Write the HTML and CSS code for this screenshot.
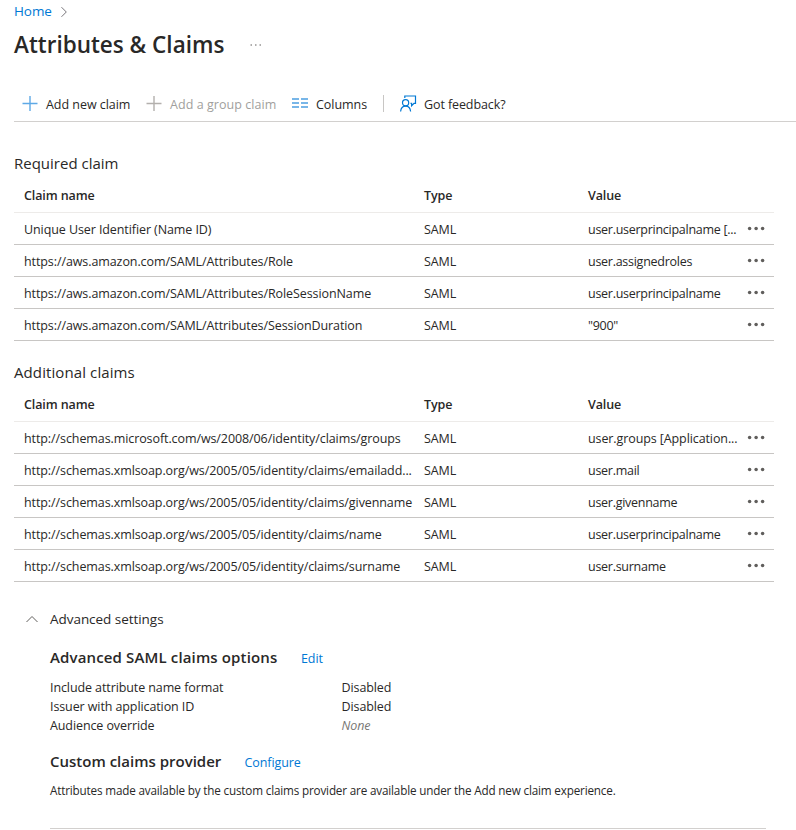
FILE: index.html
```
<!DOCTYPE html>
<html lang="en">
<head>
<meta charset="utf-8">
<title>Attributes &amp; Claims</title>
<link rel="stylesheet" href="styles.css">
</head>
<body>
<svg class="sprite" aria-hidden="true">
  <symbol id="more" viewBox="0 0 18 6"><circle cx="2.6" cy="2.6" r="1.75"/><circle cx="9.1" cy="2.6" r="1.75"/><circle cx="15.6" cy="2.6" r="1.75"/></symbol>
</svg>
<nav class="breadcrumb"><a href="#">Home</a><svg width="8" height="12" viewBox="0 0 8 12"><path d="M1.5 1.2 6.3 6 1.5 10.8"/></svg></nav>
<header class="title"><h1>Attributes &amp; Claims</h1><svg width="12" height="4" viewBox="0 0 12 4"><path d="M.5 2h1.5M5 2h1.5M9.5 2H11"/></svg></header>
<div class="toolbar">
  <button class="cmd add"><svg width="16" height="16" viewBox="0 0 16 16"><path d="M.5 7.5h15M8 0v15"/></svg><span>Add new claim</span></button>
  <button class="cmd group" disabled><svg width="16" height="16" viewBox="0 0 16 16"><path d="M.5 7.5h15M8 0v15"/></svg><span>Add a group claim</span></button>
  <button class="cmd columns"><svg width="16" height="16" viewBox="0 0 16 16"><path d="M0 3h7M9 3h7M0 7h7M9 7h7M0 11h7M9 11h7"/></svg><span>Columns</span></button>
  <i class="divider"></i>
  <button class="cmd feedback"><svg width="17" height="17" viewBox="0 0 17 17"><circle cx="5.6" cy="7.8" r="3.1"/><path d="M.6 16.5c.3-3.2 2.3-5.3 5-5.3s4.7 2.1 5 5.3M4.8 3V1H15.500V8.400H14L11.600 10.800V8.400H10.500"/></svg><span>Got feedback?</span></button>
</div>
<main>
  <section class="claims">
    <h2>Required claim</h2>
    <div class="row head"><span>Claim name</span><span>Type</span><span>Value</span></div>
    <div class="row"><span>Unique User Identifier (Name ID)</span><span>SAML</span><span>user.userprincipalname [...</span><svg><use href="#more"/></svg></div>
    <div class="row"><span>https://aws.amazon.com/SAML/Attributes/Role</span><span>SAML</span><span>user.assignedroles</span><svg><use href="#more"/></svg></div>
    <div class="row"><span>https://aws.amazon.com/SAML/Attributes/RoleSessionName</span><span>SAML</span><span>user.userprincipalname</span><svg><use href="#more"/></svg></div>
    <div class="row"><span>https://aws.amazon.com/SAML/Attributes/SessionDuration</span><span>SAML</span><span>"900"</span><svg><use href="#more"/></svg></div>
  </section>
  <section class="claims">
    <h2 class="wide">Additional claims</h2>
    <div class="row head"><span>Claim name</span><span>Type</span><span>Value</span></div>
    <div class="row"><span>http://schemas.microsoft.com/ws/2008/06/identity/claims/groups</span><span>SAML</span><span class="mixed">user.groups [Application...</span><svg><use href="#more"/></svg></div>
    <div class="row"><span>http://schemas.xmlsoap.org/ws/2005/05/identity/claims/emailadd...</span><span>SAML</span><span>user.mail</span><svg><use href="#more"/></svg></div>
    <div class="row"><span>http://schemas.xmlsoap.org/ws/2005/05/identity/claims/givenname</span><span>SAML</span><span>user.givenname</span><svg><use href="#more"/></svg></div>
    <div class="row"><span>http://schemas.xmlsoap.org/ws/2005/05/identity/claims/name</span><span>SAML</span><span>user.userprincipalname</span><svg><use href="#more"/></svg></div>
    <div class="row"><span>http://schemas.xmlsoap.org/ws/2005/05/identity/claims/surname</span><span>SAML</span><span>user.surname</span><svg><use href="#more"/></svg></div>
  </section>
  <section class="advanced">
    <div class="toggle"><svg width="12" height="8" viewBox="0 0 12 8"><path d="M.5 7 6 1.5 11.5 7"/></svg><span>Advanced settings</span></div>
    <div class="panel">
      <div class="heading"><h3 class="saml">Advanced SAML claims options</h3><a href="#">Edit</a></div>
      <dl>
        <dt>Include attribute name format</dt><dd>Disabled</dd>
        <dt>Issuer with application ID</dt><dd>Disabled</dd>
        <dt>Audience override</dt><dd class="none">None</dd>
      </dl>
      <div class="heading"><h3 class="custom">Custom claims provider</h3><a href="#">Configure</a></div>
      <p>Attributes made available by the custom claims provider are available under the Add new claim experience.</p>
    </div>
  </section>
</main>
</body>
</html>
```
FILE: styles.css
```
* { box-sizing: border-box; }
body {
  margin: 0;
  height: 830px;
  overflow: hidden;
  background: #fff;
  color: #292827;
  font: 12.5px/18px "Open Sans", "Noto Sans", sans-serif;
  letter-spacing: -0.09px;
  white-space: nowrap;
}
svg { flex: none; fill: none; }
.sprite { display: none; }
a { color: #0078d4; text-decoration: none; }
h1, h2, h3, p, dl, dd { margin: 0; }
h1, h3 { font-weight: 600; }

.breadcrumb { display: flex; align-items: center; gap: 8px; height: 24px; padding-left: 14px; font-size: 13.5px; }
.breadcrumb a { padding-bottom: 2px; }
.breadcrumb svg { stroke: #77757a; }
.title { display: flex; align-items: center; gap: 26px; height: 42px; padding-left: 14px; }
h1 { width: 210px; font-size: 22.5px; line-height: 32px; letter-spacing: 0; }
.title svg { stroke: #605e5c; }

.toolbar { display: flex; align-items: center; height: 56px; margin-left: 14px; padding: 20px 0 0 8px; border-bottom: 1px solid #d2d0ce; }
.cmd { display: flex; align-items: center; gap: 8px; height: 34px; padding: 0; border: 0; background: none; color: inherit; font: inherit; letter-spacing: -0.04px; }
.cmd span { padding-top: 2px; }
.cmd svg { stroke: #0078d4; }
.add { width: 124px; }
.add path { stroke: #5ea9e6; stroke-width: 1.4; }
.group { width: 146px; color: #a19f9d; letter-spacing: 0.05px; }
.group path { stroke: #b3b0ad; stroke-width: 1.4; }
.columns { width: 91px; }
.columns path { stroke: #78b6e8; stroke-width: 2; }
.divider { width: 1px; height: 17px; margin-right: 16px; background: #c8c6c4; }
.feedback { gap: 7px; letter-spacing: -0.1px; }
.feedback svg { stroke-width: 1.2; }

main { width: 774px; padding: 30px 0 0 14px; }
h2 { height: 27px; font-size: 15px; line-height: 22px; font-weight: 400; letter-spacing: 0; }
h2.wide { letter-spacing: 0.1px; }
.claims { margin-bottom: 20px; }
.row { display: grid; grid-template-columns: 400px 164px 159px 18px; align-items: center; height: 32px; padding-left: 10px; border-bottom: 1px solid #c8c6c4; }
.row span { padding-top: 2px; }
.row span:nth-child(3) { letter-spacing: -0.27px; }
.row .mixed:nth-child(3) { letter-spacing: -0.1px; }
.row.head { height: 34px; border-color: #edebe9; font-weight: 600; }
.row.head span, .row.head span:nth-child(3) { padding-top: 0; letter-spacing: -0.1px; }
.row svg { width: 18px; height: 6px; fill: #605e5c; }

.advanced { padding: 5px 8px 0 12px; }
.toggle { display: flex; align-items: center; gap: 12px; height: 24px; font-size: 13.5px; letter-spacing: -0.04px; }
.toggle svg { stroke: #605e5c; }
.panel { margin-left: 24px; height: 184px; border-bottom: 1px solid #d2d0ce; }
.heading { display: flex; align-items: center; height: 24px; margin-top: 14px; }
.heading a { padding-top: 4px; }
h3 { font-size: 15px; letter-spacing: 0; }
.saml { width: 251px; letter-spacing: 0.14px; }
.custom { width: 194.5px; }
dl { display: grid; grid-template-columns: 291.5px auto; margin-top: 9px; line-height: 19px; letter-spacing: -0.1px; }
.none { color: #797775; font-style: italic; }
p { margin-top: 8px; font-size: 11.7px; letter-spacing: -0.168px; }
```
